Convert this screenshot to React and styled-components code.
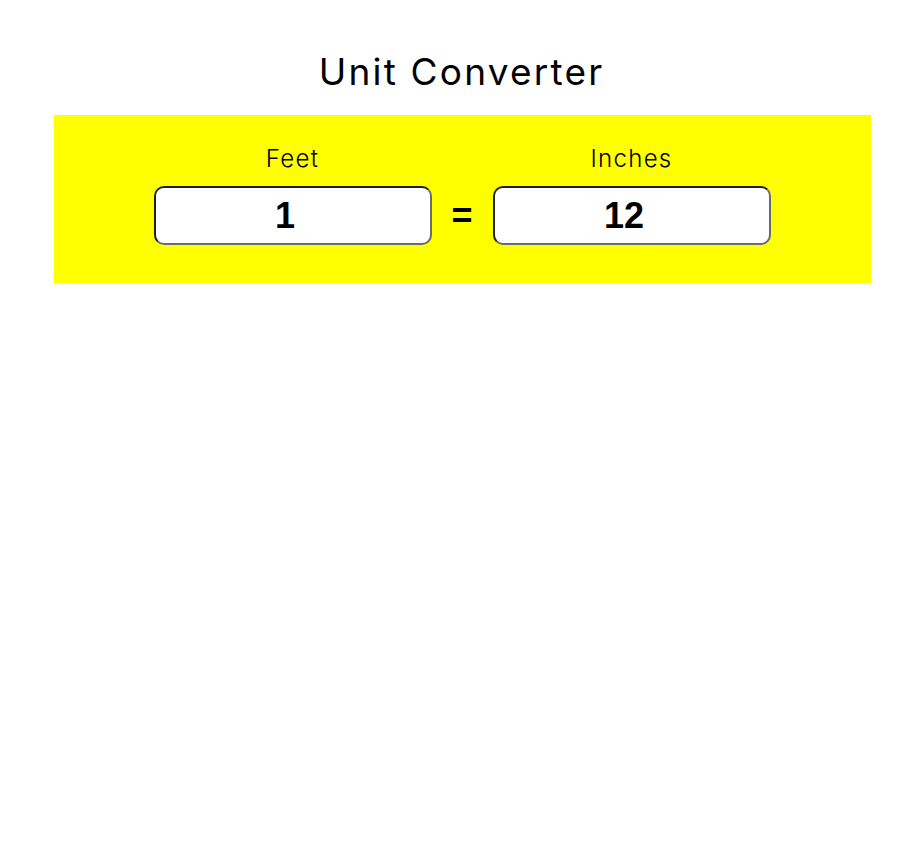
import React, { useState } from "react";
import styled, { createGlobalStyle } from "styled-components";

const GlobalStyle = createGlobalStyle`
  html, body {
    margin: 0;
    padding: 0;
    background: #ffffff;
  }
  body {
    font-family: Inter, "Noto Sans", sans-serif;
  }
`;

const Page = styled.main`
  display: flex;
  flex-direction: column;
  align-items: center;
  min-height: 867px;
`;

const Title = styled.h1`
  margin: 49px 0 21px;
  font-family: Inter, "Noto Sans", sans-serif;
  font-size: 37px;
  font-weight: 400;
  line-height: 45px;
  color: #000;
  letter-spacing: 2.2px;
`;

const Panel = styled.section`
  box-sizing: border-box;
  width: 817px;
  margin-left: 1px;
  background: #ffff00;
  padding: 29px 0 38px 0;
  display: flex;
  justify-content: center;
`;

const Grid = styled.div`
  display: grid;
  grid-template-columns: 278px 21px 278px;
  grid-template-rows: auto auto;
  column-gap: 20px;
  row-gap: 13px;
  align-items: center;
`;

const Label = styled.label`
  grid-row: 1;
  grid-column: ${(p) => p.$col};
  text-align: center;
  font-family: Inter, "Noto Sans", sans-serif;
  font-size: 24px;
  font-weight: 300;
  line-height: 29px;
  color: #000;
  letter-spacing: 1.3px;
`;

const Field = styled.input`
  grid-row: 2;
  grid-column: ${(p) => p.$col};
  box-sizing: border-box;
  width: 278px;
  height: 59px;
  border-width: 2px;
  border-style: solid;
  border-color: #1f1f1f #6b6b6b #6b6b6b #1f1f1f;
  border-radius: 10px;
  background: #fff;
  text-align: center;
  font-family: "Liberation Sans", Arial, sans-serif;
  font-size: 36px;
  font-weight: 700;
  color: #000;
  padding: 0 2px;
  outline: none;
`;

const Equals = styled.span`
  grid-row: 2;
  grid-column: 2;
  font-family: "Liberation Sans", Arial, sans-serif;
  font-size: 36px;
  font-weight: 700;
  line-height: 1;
  color: #000;
  text-align: center;
`;

export default function App() {
  const [feet, setFeet] = useState("1");
  const [inches, setInches] = useState("12");

  const onFeet = (e) => {
    const v = e.target.value;
    setFeet(v);
    const n = parseFloat(v);
    setInches(isNaN(n) ? "" : String(+(n * 12).toFixed(4)));
  };
  const onInches = (e) => {
    const v = e.target.value;
    setInches(v);
    const n = parseFloat(v);
    setFeet(isNaN(n) ? "" : String(+(n / 12).toFixed(4)));
  };

  return (
    <>
      <GlobalStyle />
      <Page>
        <Title>Unit Converter</Title>
        <Panel>
          <Grid>
            <Label $col={1} htmlFor="feet">Feet</Label>
            <Label $col={3} htmlFor="inches">Inches</Label>
            <Field id="feet" type="number" $col={1} value={feet} onChange={onFeet} />
            <Equals>=</Equals>
            <Field id="inches" type="number" $col={3} value={inches} onChange={onInches} />
          </Grid>
        </Panel>
      </Page>
    </>
  );
}
